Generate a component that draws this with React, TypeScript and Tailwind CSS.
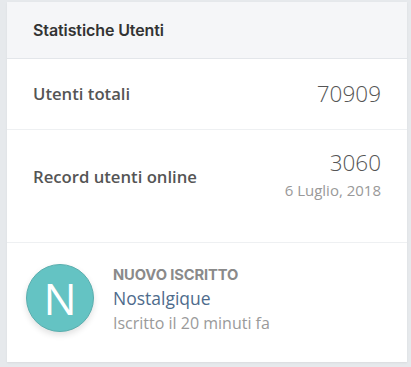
import React from 'react';

const stats = [
  { label: 'Utenti totali', value: '70909' },
];

const App: React.FC = () => {
  return (
    <div className="w-[411px] h-[367px] bg-[#e6e9ec] pt-[2px] pl-[7px] font-['Open_Sans',sans-serif]">
      <div className="w-[400px] h-[360px] bg-white shadow-[0_1px_2px_rgba(0,0,0,0.06)] flex flex-col">
        {/* Header */}
        <div className="h-[57px] bg-[#f5f6f8] border-b border-[#e3e6ea] px-[26px] flex items-center">
          <h3 className="font-['Inter',sans-serif] font-semibold text-[16px] text-[#333] tracking-[-0.1px]">Statistiche Utenti</h3>
        </div>

        {stats.map((s) => (
          <div key={s.label} className="h-[71px] border-b border-[#eef0f2] px-[26px] flex items-center justify-between">
            <span className="text-[16.7px] font-semibold text-[#555]">{s.label}</span>
            <span className="text-[22.5px] font-[350] text-[#555]">{s.value}</span>
          </div>
        ))}

        <div className="h-[113px] border-b border-[#eef0f2] px-[26px] pb-[20px] flex items-center justify-between">
          <span className="text-[16.7px] font-semibold text-[#555] mt-[1px]">Record utenti online</span>
          <div className="flex flex-col items-end">
            <span className="text-[22.5px] font-[350] leading-[28px] text-[#555]">3060</span>
            <span className="text-[15px] leading-[26px] text-[#999]">6 Luglio, 2018</span>
          </div>
        </div>

        {/* Nuovo iscritto */}
        <div className="flex-1 flex items-start pt-[21px] pl-[19px] gap-[19px]">
          <div className="w-[68px] h-[68px] rounded-full bg-[#64c3c3] border border-[#5aaeae] shadow-[0_3px_6px_rgba(0,0,0,0.12)] flex items-center justify-center">
            <span className="text-white text-[44px] font-normal leading-none">N</span>
          </div>
          <div className="flex flex-col pt-[1px]">
            <span className="font-['Inter',sans-serif] font-bold text-[14.7px] leading-[20px] text-[#8a8a8a] tracking-[-0.1px]">NUOVO ISCRITTO</span>
            <span className="text-[17.5px] leading-[26px] text-[#4e6b8c]">Nostalgique</span>
            <span className="text-[16px] leading-[25px] text-[#9a9a9a]">Iscritto il 20 minuti fa</span>
          </div>
        </div>
      </div>
    </div>
  );
};

export default App;
